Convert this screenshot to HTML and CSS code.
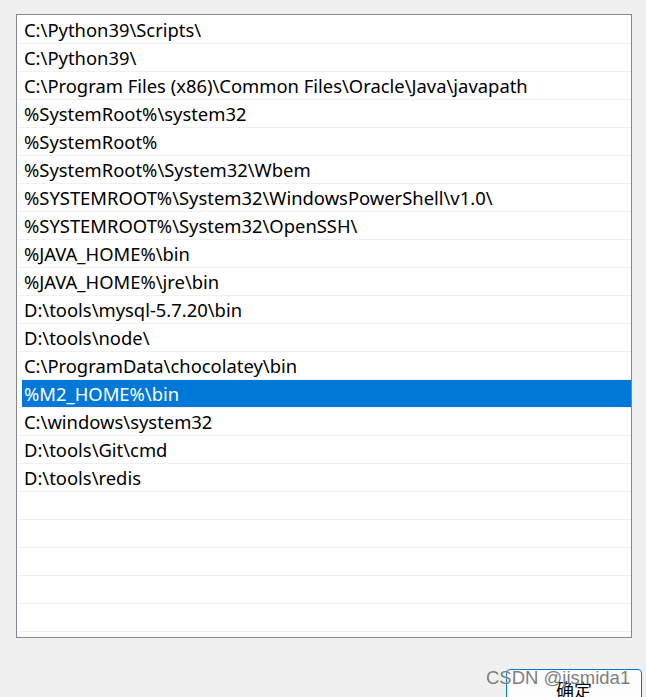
FILE: index.html
```html
<!DOCTYPE html>
<html lang="zh">
<head>
<meta charset="utf-8">
<title>编辑环境变量</title>
<link rel="stylesheet" href="styles.css">
</head>
<body>
<div class="dialog">
  <ul class="list">
    <li class="row"><span class="cell">C:\Python39\Scripts\</span></li>
    <li class="row"><span class="cell">C:\Python39\</span></li>
    <li class="row"><span class="cell">C:\Program Files (x86)\Common Files\Oracle\Java\javapath</span></li>
    <li class="row"><span class="cell">%SystemRoot%\system32</span></li>
    <li class="row"><span class="cell">%SystemRoot%</span></li>
    <li class="row"><span class="cell">%SystemRoot%\System32\Wbem</span></li>
    <li class="row"><span class="cell">%SYSTEMROOT%\System32\WindowsPowerShell\v1.0\</span></li>
    <li class="row"><span class="cell">%SYSTEMROOT%\System32\OpenSSH\</span></li>
    <li class="row"><span class="cell">%JAVA_HOME%\bin</span></li>
    <li class="row"><span class="cell">%JAVA_HOME%\jre\bin</span></li>
    <li class="row"><span class="cell">D:\tools\mysql-5.7.20\bin</span></li>
    <li class="row"><span class="cell">D:\tools\node\</span></li>
    <li class="row"><span class="cell">C:\ProgramData\chocolatey\bin</span></li>
    <li class="row selected"><span class="cell">%M2_HOME%\bin</span></li>
    <li class="row"><span class="cell">C:\windows\system32</span></li>
    <li class="row"><span class="cell">D:\tools\Git\cmd</span></li>
    <li class="row"><span class="cell">D:\tools\redis</span></li>
    <li class="row"><span class="cell"></span></li>
    <li class="row"><span class="cell"></span></li>
    <li class="row"><span class="cell"></span></li>
    <li class="row"><span class="cell"></span></li>
    <li class="row"><span class="cell"></span></li>
  </ul>
  <div class="actions">
    <button class="btn" type="button">确定</button>
  </div>
  <div class="watermark">CSDN @jismida1</div>
</div>
</body>
</html>
```

FILE: styles.css
```css
html, body {
  margin: 0;
  padding: 0;
  background: #f0f0f0;
  height: 100%;
  overflow: hidden;
}

.dialog {
  position: relative;
  padding: 14px 0 0 16px;
  font-family: "Noto Sans", "Noto Sans CJK SC", sans-serif;
}

.list {
  list-style: none;
  margin: 0;
  box-sizing: border-box;
  width: 616px;
  height: 624px;
  padding: 1px 0 0 1px;
  border: 1px solid #828790;
  background: #ffffff;
  overflow: hidden;
}

.row {
  display: flex;
  height: 27px;
  border-bottom: 1px solid #f0f0f0;
}

.cell {
  flex: 1;
  margin-left: 4px;
  padding-left: 2px;
  height: 27px;
  line-height: 28px;
  font-size: 18.4px;
  color: #000000;
  white-space: nowrap;
}

.selected .cell {
  background: #0078d7;
  color: #ffffff;
}

.actions {
  display: flex;
  justify-content: flex-end;
  padding: 31px 4px 0 0;
}

.btn {
  width: 136px;
  height: 32px;
  box-sizing: border-box;
  border: 1px solid #0078d7;
  border-radius: 4px;
  background: #fdfdfd;
  font-family: "Noto Sans CJK SC", sans-serif;
  font-size: 18px;
  color: #000000;
  padding: 6px 0 0 0;
  line-height: 26px;
}

.watermark {
  position: absolute;
  left: 486px;
  top: 667px;
  font-family: "Liberation Sans", Arial, sans-serif;
  font-size: 18.5px;
  color: rgba(100, 100, 100, 0.85);
  text-shadow: 0 0 1px rgba(255, 255, 255, 0.9);
  white-space: nowrap;
}
```
